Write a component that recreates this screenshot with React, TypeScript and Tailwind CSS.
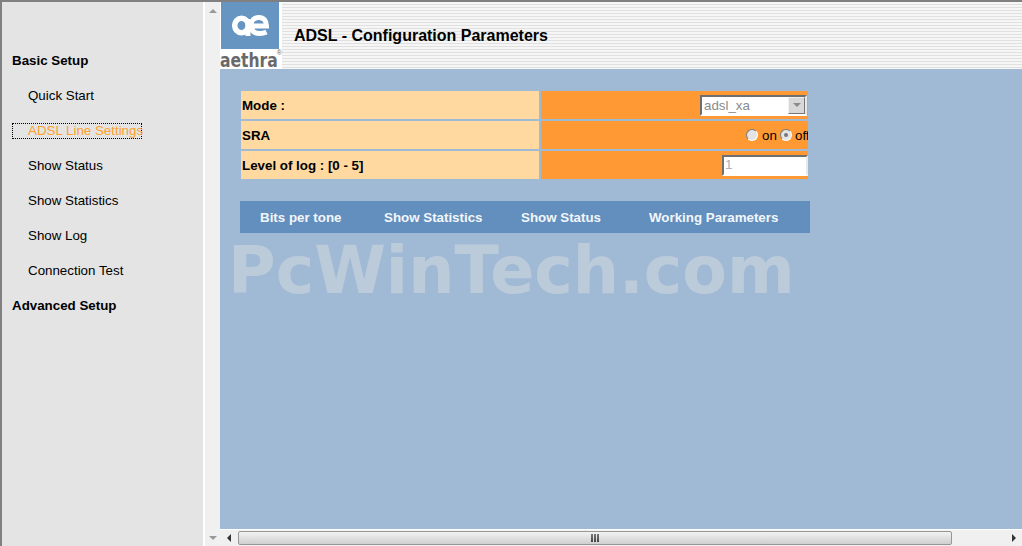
const menu = [
  { label: "Basic Setup", head: true },
  { label: "Quick Start" },
  { label: "ADSL Line Settings", active: true },
  { label: "Show Status" },
  { label: "Show Statistics" },
  { label: "Show Log" },
  { label: "Connection Test" },
  { label: "Advanced Setup", head: true },
];

const tabs = [
  { label: "Bits per tone", className: "w-[124px]" },
  { label: "Show Statistics", className: "w-[137px]" },
  { label: "Show Status", className: "w-[128px]" },
  { label: "Working Parameters", className: "" },
];

function Sidebar() {
  return (
    <aside className="flex w-[201px] shrink-0 flex-col bg-[#e4e4e4] pt-[41px] text-[13.33px]">
      {menu.map((item) =>
        item.head ? (
          <div key={item.label} className="flex h-[35px] items-center pl-[10px] font-bold text-black">
            {item.label}
          </div>
        ) : (
          <div key={item.label} className="flex h-[35px] items-center pl-[10px] text-black">
            {item.active ? (
              <span className="block h-[16px] w-[130px] border border-dotted border-black pl-[15px] leading-[14px] whitespace-nowrap text-[#ff9f2e]">
                {item.label}
              </span>
            ) : (
              <span className="pl-[16px]">{item.label}</span>
            )}
          </div>
        ),
      )}
    </aside>
  );
}

function VScrollbar() {
  return (
    <div className="flex w-[17px] shrink-0 flex-col items-center justify-between border-l-2 border-white bg-[#f0f0f0] pt-[7px] pb-[6px]">
      <div className="h-0 w-0 border-x-[4px] border-b-[4px] border-x-transparent border-b-[#999999]" />
      <div className="h-0 w-0 border-x-[4px] border-t-[4px] border-x-transparent border-t-[#999999]" />
    </div>
  );
}

function HScrollbar() {
  return (
    <div className="flex h-[17px] shrink-0 items-center border-t border-white bg-[#f0f0f0]">
      <div className="ml-[7px] h-0 w-0 border-y-[4px] border-r-[4px] border-y-transparent border-r-[#333333]" />
      <div className="ml-[7px] flex h-[14px] w-[714px] items-center justify-center gap-[1px] rounded-[2px] border border-[#979797] bg-gradient-to-b from-[#f2f2f2] to-[#cfcfcf]">
        <span className="h-[8px] w-[2px] bg-gradient-to-b from-[#777777] to-[#444444]" />
        <span className="h-[8px] w-[2px] bg-gradient-to-b from-[#777777] to-[#444444]" />
        <span className="h-[8px] w-[2px] bg-gradient-to-b from-[#777777] to-[#444444]" />
      </div>
      <div className="ml-[60px] h-0 w-0 border-y-[4px] border-l-[4px] border-y-transparent border-l-[#333333]" />
    </div>
  );
}

function Logo() {
  return (
    <div className="flex h-[67px] w-[62px] shrink-0 flex-col bg-white">
      <div className="ml-[1px] flex h-[47px] w-[58px] items-center justify-center bg-[#6595c0]">
        <svg width="37" height="21" viewBox="0 0 37 21" fill="none">
          <ellipse cx="9.500" cy="10.500" rx="6.800" ry="7.300" stroke="white" strokeWidth="5.500" />
          <path d="M16 4v17" stroke="white" strokeWidth="5" />
          <path d="M19 11h15.500C34.500 5.500 31.500 2.500 27 2.500c-5 0-8 3.500-8 8 0 5 3 8 8.500 8 3 0 5-.5 7-1.500" stroke="white" strokeWidth="5" />
        </svg>
      </div>
      <div className="relative h-[20px]">
        <div className="origin-left scale-x-[0.82] font-['DejaVu_Sans',sans-serif] text-[19px] leading-[23px] font-bold whitespace-nowrap text-[#6a6a6a]">
          aethra
        </div>
        <span className="absolute top-[0px] right-[0px] text-[7px] leading-[8px] text-[#6a6a6a]">®</span>
      </div>
    </div>
  );
}

function FormRow({ label, children }: { label: string; children: React.ReactNode }) {
  return (
    <div className="flex h-[28px] gap-[2px]">
      <div className="flex w-[298px] items-center bg-[#ffd9a0] pt-[1px] pl-[1px] font-bold text-black">{label}</div>
      <div className="flex w-[267px] items-center justify-end bg-[#ff9933]">{children}</div>
    </div>
  );
}

export default function App() {
  return (
    <div className="flex h-[546px] w-[1022px] overflow-hidden border-t-2 border-l-2 border-[#808080] font-['Liberation_Sans',Arial,sans-serif]">
      <Sidebar />
      <VScrollbar />
      <div className="flex min-w-0 flex-1 flex-col">
        <header className="flex h-[67px] shrink-0 items-center bg-[repeating-linear-gradient(180deg,#f6f6f6_0_2px,#e0e0e0_2px_3px)]">
          <Logo />
          <h1 className="ml-[12px] text-[16px] font-bold text-black">ADSL - Configuration Parameters</h1>
        </header>
        <main className="relative flex-1 bg-[#a0bad6] pt-[22px] pl-[21px] text-[13.33px]">
          <div className="flex w-[567px] flex-col gap-[2px]">
            <FormRow label="Mode :">
              <div className="mr-[1px] flex h-[21px] w-[107px] items-center justify-between border-2 border-[#6f6f6f] border-r-[#e8e8e8] border-b-white bg-white pl-[2px] text-[#8a8a8a]">
                <span className="pt-[1px]">adsl_xa</span>
                <div className="flex h-[17px] w-[17px] items-center justify-center border border-[#f0f0f0] border-r-[#777777] border-b-[#777777] bg-[#d8d8d8]">
                  <div className="h-0 w-0 border-x-[4px] border-t-[4px] border-x-transparent border-t-[#8a8a8a]" />
                </div>
              </div>
            </FormRow>
            <FormRow label="SRA">
              <div className="flex items-center text-black">
                <span className="h-[12px] w-[12px] rounded-full border border-[#7a7a7a] border-r-white border-b-white bg-[#e4e4e4]" />
                <span className="ml-[4px] w-[14px] pt-[2px]">on</span>
                <span className="ml-[4px] flex h-[12px] w-[12px] items-center justify-center rounded-full border border-[#7a7a7a] border-r-white border-b-white bg-[#e4e4e4]">
                  <span className="h-[4px] w-[4px] rounded-full bg-[#777777]" />
                </span>
                <span className="ml-[3px] w-[13px] overflow-hidden pt-[2px]">off</span>
              </div>
            </FormRow>
            <FormRow label="Level of log : [0 - 5]">
              <div className="flex h-[21px] w-[86px] items-center border-2 border-[#6f6f6f] border-r-[#e8e8e8] border-b-white bg-white pl-[1px] text-[#a8b0c0]">
                1
              </div>
            </FormRow>
          </div>
          <nav className="mt-[22px] ml-[-1px] flex h-[32px] w-[570px] items-center bg-[#628fbd] pt-[1px] pl-[20px] font-bold text-[#f2f6fb]">
            {tabs.map((tab) => (
              <div key={tab.label} className={tab.className}>
                {tab.label}
              </div>
            ))}
          </nav>
          <div className="absolute top-[162px] left-[8px] font-['DejaVu_Sans',sans-serif] text-[65px] leading-[80px] font-bold whitespace-nowrap text-[#bccbda]">
            PcWinTech.com
          </div>
        </main>
        <HScrollbar />
      </div>
    </div>
  );
}
